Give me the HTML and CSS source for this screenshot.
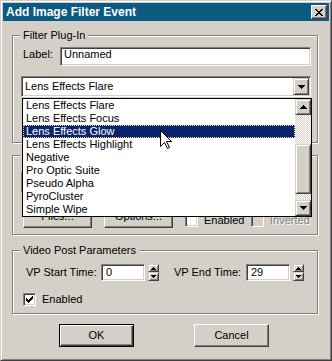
FILE: index.html
```html
<!DOCTYPE html>
<html>
<head>
<meta charset="utf-8">
<title>Add Image Filter Event</title>
<link rel="stylesheet" href="styles.css">
</head>
<body>
<div class="window">
  <div class="titlebar">
    <span class="title">Add Image Filter Event</span>
    <span class="close raised"><svg class="glyph" width="8" height="7" viewBox="0 0 8 7"><path d="M0 0h2v1H0z M6 0h2v1H6z M1 1h2v1H1z M5 1h2v1H5z M2 2h4v1H2z M3 3h2v1H3z M2 4h4v1H2z M1 5h2v1H1z M5 5h2v1H5z M0 6h2v1H0z M6 6h2v1H6z"/></svg></span>
  </div>

  <div class="group g1">
    <div class="legend">Filter Plug-In</div>
    <div class="label-row">
      <span class="lbl">Label:</span>
      <div class="field wide">Unnamed</div>
    </div>
    <div class="combo">
      <span class="combo-text">Lens Effects Flare</span>
      <span class="combo-btn sbtn"><svg class="glyph" width="7" height="4" viewBox="0 0 7 4"><path d="M0 0h7v1H0z M1 1h5v1H1z M2 2h3v1H2z M3 3h1v1H3z"/></svg></span>
    </div>
    <div class="btn-row">
      <div class="btn small raised"></div>
      <div class="btn small raised"></div>
    </div>
  </div>

  <div class="group g2">
    <div class="legend blank"></div>
    <div class="combo">
      <span class="combo-text"></span>
      <span class="combo-btn sbtn"><svg class="glyph" width="7" height="4" viewBox="0 0 7 4"><path d="M0 0h7v1H0z M1 1h5v1H1z M2 2h3v1H2z M3 3h1v1H3z"/></svg></span>
    </div>
    <div class="mask-row">
      <div class="btn small raised">Files...</div>
      <div class="btn small raised">Options...</div>
      <div class="check-item first"><span class="checkbox"></span><span class="check-label">Enabled</span></div>
      <div class="check-item disabled"><span class="checkbox"></span><span class="check-label">Inverted</span></div>
    </div>
  </div>

  <div class="group g3">
    <div class="legend">Video Post Parameters</div>
    <div class="spin-row">
      <span class="vp-lbl start">VP Start Time:</span>
      <div class="field num">0</div>
      <div class="spin">
        <span class="spin-half up sbtn"><svg class="glyph" width="5" height="3" viewBox="0 0 5 3"><path d="M2 0h1v1H2z M1 1h3v1H1z M0 2h5v1H0z"/></svg></span>
        <span class="spin-half down sbtn"><svg class="glyph" width="5" height="3" viewBox="0 0 5 3"><path d="M0 0h5v1H0z M1 1h3v1H1z M2 2h1v1H2z"/></svg></span>
      </div>
      <span class="vp-lbl end">VP End Time:</span>
      <div class="field num">29</div>
      <div class="spin">
        <span class="spin-half up sbtn"><svg class="glyph" width="5" height="3" viewBox="0 0 5 3"><path d="M2 0h1v1H2z M1 1h3v1H1z M0 2h5v1H0z"/></svg></span>
        <span class="spin-half down sbtn"><svg class="glyph" width="5" height="3" viewBox="0 0 5 3"><path d="M0 0h5v1H0z M1 1h3v1H1z M2 2h1v1H2z"/></svg></span>
      </div>
    </div>
    <div class="check-row">
      <span class="checkbox"><svg class="glyph" width="7" height="7" viewBox="0 0 7 7"><path d="M6 0h1v1H6z M5 1h2v1H5z M0 2h1v1H0z M4 2h3v1H4z M0 3h2v1H0z M3 3h3v1H3z M0 4h5v1H0z M1 5h3v1H1z M2 6h1v1H2z"/></svg></span>
      <span class="check-label">Enabled</span>
    </div>
  </div>

  <div class="actions">
    <div class="btn big default">OK</div>
    <div class="btn big raised">Cancel</div>
  </div>

  <div class="dropdown">
    <div class="items">
      <div class="item">Lens Effects Flare</div>
      <div class="item">Lens Effects Focus</div>
      <div class="item sel">Lens Effects Glow</div>
      <div class="item">Lens Effects Highlight</div>
      <div class="item">Negative</div>
      <div class="item">Pro Optic Suite</div>
      <div class="item">Pseudo Alpha</div>
      <div class="item">PyroCluster</div>
      <div class="item">Simple Wipe</div>
    </div>
    <div class="scrollbar">
      <span class="sb-btn sbtn"><svg class="glyph" width="7" height="4" viewBox="0 0 7 4"><path d="M3 0h1v1H3z M2 1h3v1H2z M1 2h5v1H1z M0 3h7v1H0z"/></svg></span>
      <span class="track t1"></span>
      <span class="thumb sbtn"></span>
      <span class="track t2"></span>
      <span class="sb-btn sbtn"><svg class="glyph" width="7" height="4" viewBox="0 0 7 4"><path d="M0 0h7v1H0z M1 1h5v1H1z M2 2h3v1H2z M3 3h1v1H3z"/></svg></span>
    </div>
  </div>

  <svg class="cursor" width="12" height="19" viewBox="0 0 12 19"><path d="M0.5 0.5V16.5L4.5 12.5L7.5 18.5L9.5 17.5L6.5 11.5H11.5Z" fill="#fff" stroke="#000" stroke-width="1"/></svg>
</div>
</body>
</html>
```

FILE: styles.css
```css
* { box-sizing: border-box; }
html, body { margin: 0; padding: 0; }
body {
  font: 11px/13px "Liberation Sans", Arial, sans-serif;
  color: #000;
  background: #d4d0c8;
}
.glyph { display: block; fill: #000; shape-rendering: crispEdges; }

.window {
  position: relative;
  width: 332px;
  height: 361px;
  background: #d4d0c8;
  border: 1px solid;
  border-color: #d4d0c8 #404040 #404040 #d4d0c8;
  box-shadow: inset 1px 1px #fff, inset -1px -1px #808080;
  padding: 2px;
}

.titlebar {
  height: 18px;
  background: #0a5a82;
  display: flex;
  align-items: center;
  justify-content: space-between;
  padding: 0 2px 0 3px;
  color: #fff;
  font-weight: bold;
  font-size: 12px;
  line-height: 14px;
}
.close {
  width: 16px;
  height: 14px;
  display: flex;
  align-items: center;
  justify-content: center;
}

.raised {
  background: #d4d0c8;
  border: 1px solid;
  border-color: #fff #404040 #404040 #fff;
  box-shadow: inset -1px -1px #808080;
}
.sbtn {
  background: #d4d0c8;
  border: 1px solid;
  border-color: #d4d0c8 #404040 #404040 #d4d0c8;
  box-shadow: inset 1px 1px #fff, inset -1px -1px #808080;
}

.group {
  margin: 0 11px 0 9px;
  border: 1px solid #808080;
  box-shadow: inset 1px 1px #fff, 1px 1px #fff;
}
.g1 { margin-top: 14px; height: 108px; }
.g2 { margin-top: 12px; height: 80px; }
.g3 { margin-top: 15px; height: 64px; }

.legend {
  width: fit-content;
  height: 13px;
  margin: -7px 0 0 7px;
  padding: 0 3px;
  background: #d4d0c8;
}
.legend.blank { width: 36px; }

.field {
  background: #fff;
  border: 1px solid;
  border-color: #808080 #fff #fff #808080;
  box-shadow: inset 1px 1px #404040, inset -1px -1px #d4d0c8;
  white-space: nowrap;
}

.label-row {
  display: flex;
  margin-top: 5px;
  padding-left: 10px;
}
.lbl { width: 37px; margin-top: 1px; }
.field.wide { width: 251px; height: 19px; padding-left: 3px; line-height: 13px; }

.combo {
  display: flex;
  align-items: center;
  width: 290px;
  height: 21px;
  margin: 10px 0 0 8px;
  padding: 1px;
  background: #fff;
  border: 1px solid;
  border-color: #808080 #fff #fff #808080;
  box-shadow: inset 1px 1px #404040, inset -1px -1px #d4d0c8;
}
.combo-text { flex: 1; padding-left: 2px; white-space: nowrap; }
.combo-btn {
  width: 16px;
  height: 17px;
  display: flex;
  align-items: center;
  justify-content: center;
}

.btn {
  display: flex;
  align-items: center;
  justify-content: center;
}
.btn.small { width: 69px; height: 23px; }
.btn.big { width: 75px; height: 23px; }
.btn.default {
  background: #d4d0c8;
  border: 1px solid #000;
  box-shadow: inset 1px 1px #fff, inset -1px -1px #404040, inset -2px -2px #808080;
}

.btn-row {
  display: flex;
  gap: 12px;
  margin-top: 8px;
  padding-left: 10px;
}

.mask-row {
  display: flex;
  margin-top: 12px;
  padding-left: 10px;
  height: 23px;
}
.mask-row .btn + .btn { margin-left: 12px; }
.check-item {
  display: flex;
  align-items: center;
  align-self: flex-end;
  margin-bottom: 1px;
  height: 13px;
}
.check-item.first { margin-left: 12px; width: 66px; }
.checkbox {
  width: 13px;
  height: 13px;
  flex: none;
  background: #fff;
  border: 1px solid;
  border-color: #808080 #fff #fff #808080;
  box-shadow: inset 1px 1px #404040, inset -1px -1px #d4d0c8;
  display: flex;
  align-items: center;
  justify-content: center;
}
.check-label { margin-left: 6px; white-space: nowrap; }
.check-item.disabled .checkbox { background: #d4d0c8; }
.check-item.disabled .check-label { color: #808080; text-shadow: 1px 1px #fff; }

.spin-row {
  display: flex;
  align-items: center;
  margin-top: 7px;
  padding-left: 13px;
  height: 17px;
}
.vp-lbl { white-space: nowrap; }
.vp-lbl.start { width: 75px; }
.vp-lbl.end { width: 72px; margin-left: 15px; }
.field.num { width: 44px; height: 17px; padding-left: 4px; line-height: 14px; }
.spin {
  display: flex;
  flex-direction: column;
  width: 11px;
  height: 17px;
  margin-left: 3px;
}
.spin-half {
  display: flex;
  align-items: center;
  justify-content: center;
}
.spin-half.up { height: 8px; }
.spin-half.down { height: 9px; }

.check-row {
  display: flex;
  align-items: center;
  margin-top: 12px;
  padding-left: 10px;
  height: 13px;
}

.actions {
  display: flex;
  gap: 60px;
  margin-top: 10px;
  padding-left: 56px;
}

.dropdown {
  position: absolute;
  left: 21px;
  top: 97px;
  width: 290px;
  height: 119px;
  background: #fff;
  border: 1px solid #000;
  display: flex;
  z-index: 2;
}
.items { flex: 1; }
.item {
  height: 13px;
  line-height: 13px;
  padding-left: 3px;
  white-space: nowrap;
}
.item.sel {
  background: #0a246a;
  color: #fff;
  border: 1px dotted #f5db95;
  padding-left: 2px;
  line-height: 11px;
}
.scrollbar {
  width: 16px;
  display: flex;
  flex-direction: column;
}
.sb-btn {
  height: 16px;
  display: flex;
  align-items: center;
  justify-content: center;
}
.track {
  background: repeating-conic-gradient(#d4d0c8 0 25%, #fff 0 50%) 0 0 / 2px 2px;
}
.t1 { height: 29px; }
.t2 { height: 6px; }
.thumb { height: 50px; }

.cursor {
  position: absolute;
  left: 159px;
  top: 129px;
  z-index: 3;
}
```
